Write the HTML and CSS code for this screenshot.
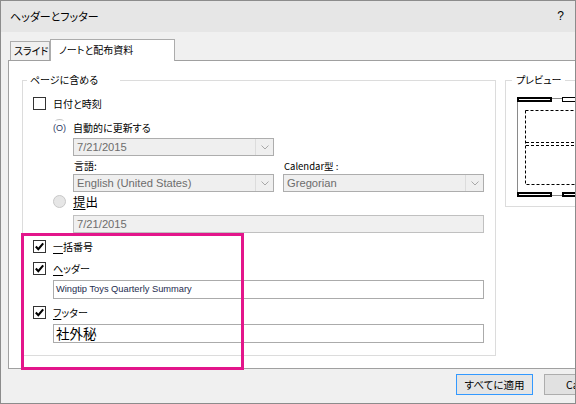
FILE: index.html
```html
<!DOCTYPE html>
<html lang="ja">
<head>
<meta charset="UTF-8" />
<title>ヘッダーとフッター</title>
<link rel="stylesheet" href="styles.css">
</head>
<body>
<div class="dialog">
  <div class="titlebar">
    <span>ヘッダーとフッター</span>
    <span class="help">?</span>
  </div>

  <div class="tabs">
    <div class="tab">スライド</div>
    <div class="tab active">ノートと配布資料</div>
  </div>

  <div class="panel">
    <fieldset class="group include">
      <legend>ページに含める</legend>

      <div class="check-row date-check">
        <span class="checkbox"></span>
        <span>日付と時刻</span>
      </div>

      <div class="radio-row auto-row">
        <span class="radio-glitch">(O)</span>
        <span>自動的に更新する</span>
      </div>

      <div class="select date-select">
        <span class="value">7/21/2015</span>
        <span class="arrow"><svg width="8" height="5" viewBox="0 0 8 5"><path d="M0.5 0.5 L4 4 L7.5 0.5" fill="none" stroke="#a8a8a8" stroke-width="1"/></svg></span>
      </div>

      <div class="pair labels">
        <span>言語:</span>
        <span class="cal-label">Calendar型 :</span>
      </div>

      <div class="pair selects">
        <div class="select">
          <span class="value">English (United States)</span>
          <span class="arrow"><svg width="8" height="5" viewBox="0 0 8 5"><path d="M0.5 0.5 L4 4 L7.5 0.5" fill="none" stroke="#a8a8a8" stroke-width="1"/></svg></span>
        </div>
        <div class="select">
          <span class="value">Gregorian</span>
          <span class="arrow"><svg width="8" height="5" viewBox="0 0 8 5"><path d="M0.5 0.5 L4 4 L7.5 0.5" fill="none" stroke="#a8a8a8" stroke-width="1"/></svg></span>
        </div>
      </div>

      <div class="radio-row fixed-row">
        <span class="radio"></span>
        <span class="big"><u>提</u>出</span>
      </div>

      <div class="field fixed-date">7/21/2015</div>

      <div class="check-row number-check">
        <span class="checkbox checked"><svg width="11" height="11" viewBox="0 0 11 11"><path d="M1.8 5.6 L4.3 8.2 L9.2 2.4" fill="none" stroke="#000" stroke-width="2.1"/></svg></span>
        <span><u>一</u>括番号</span>
      </div>

      <div class="check-row header-check">
        <span class="checkbox checked"><svg width="11" height="11" viewBox="0 0 11 11"><path d="M1.8 5.6 L4.3 8.2 L9.2 2.4" fill="none" stroke="#000" stroke-width="2.1"/></svg></span>
        <span><u>ヘ</u>ッダー</span>
      </div>

      <div class="input header-input">Wingtip Toys Quarterly Summary</div>

      <div class="check-row footer-check">
        <span class="checkbox checked"><svg width="11" height="11" viewBox="0 0 11 11"><path d="M1.8 5.6 L4.3 8.2 L9.2 2.4" fill="none" stroke="#000" stroke-width="2.1"/></svg></span>
        <span><u>フ</u>ッター</span>
      </div>

      <div class="input footer-input">社外秘</div>
    </fieldset>

    <fieldset class="group preview">
      <legend>プレビュー</legend>
      <svg class="page" width="70" height="101" viewBox="0 0 70 101">
        <rect x="0.5" y="1.5" width="80" height="97" fill="#fff" stroke="#8a8a8a" stroke-width="1"/>
        <rect x="8.5" y="13.5" width="80" height="74" fill="none" stroke="#000" stroke-width="1" stroke-dasharray="3 2"/>
        <line x1="9" y1="45.5" x2="70" y2="45.5" stroke="#000" stroke-dasharray="3 2"/>
        <line x1="9" y1="48.5" x2="70" y2="48.5" stroke="#000" stroke-dasharray="3 2"/>
        <rect x="1" y="1" width="33" height="3" fill="#fff" stroke="#000" stroke-width="2"/>
        <rect x="45.5" y="0.5" width="40" height="4" fill="#fff" stroke="#000" stroke-width="1"/>
        <rect x="1" y="96" width="33" height="3" fill="#fff" stroke="#000" stroke-width="2"/>
        <rect x="46" y="96" width="40" height="3" fill="#fff" stroke="#000" stroke-width="2"/>
      </svg>
    </fieldset>
  </div>

  <div class="buttons">
    <button class="btn default">すべてに適用</button>
    <button class="btn">Cancel</button>
  </div>
</div>

<div class="highlight"></div>
</body>
</html>
```

FILE: styles.css
```css
body {
  margin: 0;
  font-family: "Noto Sans CJK JP", sans-serif;
  font-size: 10px;
  font-feature-settings: "palt";
  color: #000;
  background: #fff;
}
u {
  text-decoration-thickness: 1px;
  text-underline-offset: 2px;
}
.dialog {
  width: 576px;
  height: 404px;
  box-sizing: border-box;
  border: 1px solid #8c8c8c;
  background: #f0f0f0;
  overflow: hidden;
}
.titlebar {
  height: 31px;
  background: #e6e6e6;
  display: flex;
  justify-content: space-between;
  align-items: center;
  padding: 0 11px 2px 9px;
  box-sizing: border-box;
  font-size: 11px;
}
.help {
  font-family: "Liberation Sans", sans-serif;
  font-size: 12px;
}

/* tabs */
.tabs {
  height: 28px;
  display: flex;
  align-items: flex-end;
  padding-left: 9px;
}
.tab {
  width: 35px;
  height: 18px;
  line-height: 17px;
  border: 1px solid #acacac;
  border-bottom: none;
  padding-left: 3px;
  box-sizing: content-box;
  white-space: nowrap;
  overflow: hidden;
}
.tab.active {
  width: 115px;
  height: 21px;
  line-height: 20px;
  padding-left: 8px;
  background: #fff;
  position: relative;
  top: 1px;
  z-index: 1;
}

/* panel */
.panel {
  margin-left: 7px;
  height: 309px;
  box-sizing: border-box;
  background: #fff;
  border: 1px solid #a0a0a0;
  border-right: none;
  display: flex;
  align-items: flex-start;
  padding: 12px 0 0 13px;
  overflow: hidden;
}
.group {
  flex: none;
  margin: 0;
  border: 1px solid #dcdcdc;
  box-sizing: border-box;
  min-width: 0;
}
.group legend {
  line-height: 14px;
  height: 14px;
  padding: 0 22px 0 3px;
  margin-left: 4px;
}
.include {
  width: 474px;
  padding: 0 0 12px;
}
.preview {
  width: 90px;
  margin-left: 9px;
  padding: 0 0 8px 11px;
}
.preview legend {
  padding: 0 4px;
  margin-left: -5px;
}
.page {
  display: block;
  margin-top: 10px;
}

/* rows */
.check-row, .radio-row {
  display: flex;
  align-items: center;
  gap: 7px;
  height: 13px;
  white-space: nowrap;
}
.check-row { margin-left: 10px; }
.radio-row { margin-left: 30px; }
.date-check { margin-top: 10px; }
.auto-row { margin-top: 11px; }
.fixed-row { margin-top: 2px; height: 14px; }
.number-check { margin-top: 7px; }
.header-check { margin-top: 9px; }
.footer-check { margin-top: 7px; }

.checkbox {
  width: 13px;
  height: 13px;
  box-sizing: border-box;
  border: 1px solid #333;
  background: #fff;
  display: flex;
  align-items: center;
  justify-content: center;
}
.radio {
  width: 13px;
  height: 13px;
  box-sizing: border-box;
  border-radius: 50%;
  border: 1px solid #c8c8c8;
  background: #e6e6e6;
}
.radio-glitch {
  width: 13px;
  font-family: "Liberation Sans", sans-serif;
  font-size: 9px;
  color: #2c3b63;
  position: relative;
}
.radio-glitch::before {
  content: "";
  position: absolute;
  left: 2px;
  top: -4px;
  width: 9px;
  height: 4px;
  border-top: 1px solid #c6c6c6;
  border-radius: 50% 50% 0 0;
}
.big { font-size: 12.5px; }

/* controls */
.select {
  display: flex;
  width: 201px;
  height: 18px;
  box-sizing: border-box;
  border: 1px solid #adadad;
  background: #efefef;
  color: #6d6d6d;
  font-family: "Liberation Sans", sans-serif;
  font-size: 11.2px;
}
.select .value {
  flex: 1;
  padding-left: 3px;
  line-height: 16px;
}
.select .arrow {
  width: 17px;
  border-left: 1px solid #dcdcdc;
  display: flex;
  align-items: center;
  justify-content: center;
}
.date-select {
  margin: 4px 0 0 50px;
}
.pair {
  display: flex;
  gap: 9px;
  margin-left: 50px;
}
.labels {
  margin-top: 3px;
  height: 14px;
  line-height: 14px;
}
.labels span {
  width: 200px;
  padding-left: 1px;
}
.cal-label {
  font-size: 9.5px;
}
.selects {
  margin-top: 1px;
}
.field {
  margin: 7px 0 0 50px;
  width: 411px;
  height: 18px;
  box-sizing: border-box;
  border: 1px solid #c0c0c0;
  background: #f0f0f0;
  color: #6d6d6d;
  font-family: "Liberation Sans", sans-serif;
  font-size: 11.2px;
  line-height: 16px;
  padding-left: 3px;
}
.input {
  margin: 5px 0 0 30px;
  width: 431px;
  height: 19px;
  box-sizing: border-box;
  border: 1px solid #ababab;
  background: #fff;
  padding-left: 2px;
  line-height: 17px;
  white-space: nowrap;
}
.header-input {
  font-family: "Liberation Sans", sans-serif;
  font-size: 9.3px;
  color: #1e2b4e;
}
.footer-input {
  font-size: 13.5px;
}

/* buttons */
.buttons {
  display: flex;
  gap: 11px;
  margin-top: 5px;
  padding-left: 455px;
}
.btn {
  flex: none;
  width: 77px;
  height: 21px;
  margin: 0;
  padding: 0;
  border: 1px solid #adadad;
  background: #e1e1e1;
  font-family: "Noto Sans CJK JP", sans-serif;
  font-feature-settings: "palt";
  font-size: 10.5px;
  color: #000;
}
.btn.default {
  border-color: #3399ff;
  background: #e5e5e5;
}

/* annotation */
.highlight {
  position: absolute;
  left: 21px;
  top: 233px;
  width: 223px;
  height: 137px;
  box-sizing: border-box;
  border: 3px solid #e3168b;
}
```
